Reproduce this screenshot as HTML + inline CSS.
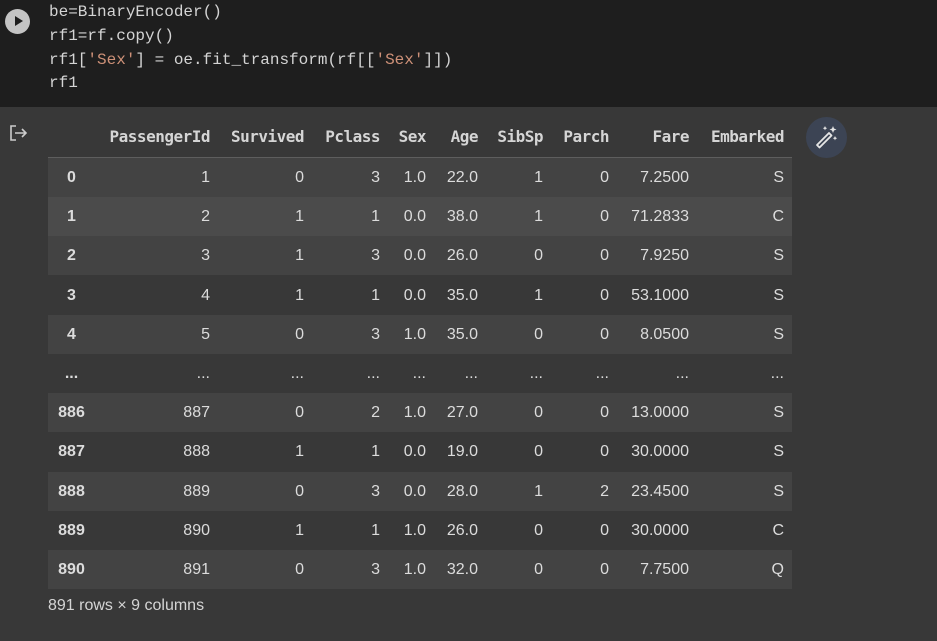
<!DOCTYPE html>
<html><head><style>
body{margin:0;width:937px;height:641px;background:#383838;overflow:hidden;position:relative;font-family:"Liberation Sans",sans-serif;}
.code{position:absolute;left:0;top:0;width:937px;height:107px;background:#1e1e1e;}
.cl{position:absolute;left:49px;font-family:"Liberation Mono","DejaVu Sans Mono",monospace;font-size:16px;color:#d4d4d4;white-space:pre;}
.s{color:#ce9178}
.run{position:absolute;left:5px;top:9px;width:25px;height:25px;border-radius:50%;background:#c4c4c4;}
.run:after{content:"";position:absolute;left:10px;top:7px;border-left:8px solid #1e1e1e;border-top:5.5px solid transparent;border-bottom:5.5px solid transparent;}
.row{position:absolute;left:48px;width:744px;height:39px;}
.c{position:absolute;font-size:16px;color:#dcdcdc;line-height:39px;text-align:right;}
.h{position:absolute;font-family:"DejaVu Sans Mono","Liberation Mono",monospace;font-weight:bold;font-size:16px;letter-spacing:-0.5px;color:#d5d5d5;top:127px;}
.i{font-weight:bold;text-align:center;}
</style></head><body>
<div class="code">
<div class="run"></div>
<div class="cl" style="top:3px">be=BinaryEncoder()</div>
<div class="cl" style="top:27px">rf1=rf.copy()</div>
<div class="cl" style="top:51px">rf1[<span class="s">'Sex'</span>] = oe.fit_transform(rf[[<span class="s">'Sex'</span>]])</div>
<div class="cl" style="top:74px">rf1</div>
</div>
<svg style="position:absolute;left:9px;top:124px" width="20" height="18" viewBox="0 0 20 18"><path d="M7 2H2v14h5" fill="none" stroke="#ccc" stroke-width="1.6"/><path d="M6 9h11M13 5l4 4-4 4" fill="none" stroke="#ccc" stroke-width="1.6"/></svg>
<div style="position:absolute;left:806px;top:117px;width:41px;height:41px;border-radius:50%;background:#3c4454"></div>
<svg style="position:absolute;left:813px;top:123px" width="28" height="28" viewBox="0 0 28 28"><path d="M4 22l12-12 2.5 2.5-12 12z" fill="none" stroke="#e6e6e6" stroke-width="1.8" stroke-linejoin="round"/><path d="M20 3l1 2.5 2.5 1-2.5 1-1 2.5-1-2.5-2.5-1 2.5-1zM12 3l.7 1.5 1.5.7-1.5.7-.7 1.5-.7-1.5-1.5-.7 1.5-.7zM22 13l.7 1.5 1.5.7-1.5.7-.7 1.5-.7-1.5-1.5-.7 1.5-.7z" fill="#e6e6e6"/></svg>
<div id="t"></div>
<div style="position:absolute;left:48px;top:157px;width:744px;height:1px;background:#5e5e5e"></div>
<div style="position:absolute;left:48px;top:597px;font-size:16px;color:#d5d5d5">891 rows × 9 columns</div>
<script>
var hdr=["PassengerId","Survived","Pclass","Sex","Age","SibSp","Parch","Fare","Embarked"];
var R=[210,304,380,426,478,543,609,689,784];
var rows=[["0",1,0,3,"1.0","22.0",1,0,"7.2500","S"],["1",2,1,1,"0.0","38.0",1,0,"71.2833","C"],["2",3,1,3,"0.0","26.0",0,0,"7.9250","S"],["3",4,1,1,"0.0","35.0",1,0,"53.1000","S"],["4",5,0,3,"1.0","35.0",0,0,"8.0500","S"],["...","...","...","...","...","...","...","...","...","..."],["886",887,0,2,"1.0","27.0",0,0,"13.0000","S"],["887",888,1,1,"0.0","19.0",0,0,"30.0000","S"],["888",889,0,3,"0.0","28.0",1,2,"23.4500","S"],["889",890,1,1,"1.0","26.0",0,0,"30.0000","C"],["890",891,0,3,"1.0","32.0",0,0,"7.7500","Q"]];
var h="";
hdr.forEach(function(t,k){h+='<div class="h" style="right:'+(937-R[k])+'px">'+t+'</div>';});
rows.forEach(function(r,i){
 var top=158+i*39.2;
 var bg=i%2==0?"#434343":"#383838"; if(i==1)bg="#4b4b4b";
 h+='<div class="row" style="top:'+top+'px;background:'+bg+'"></div>';
 h+='<div class="c i" style="top:'+top+'px;left:48px;width:47px">'+r[0]+'</div>';
 for(var k=1;k<10;k++) h+='<div class="c" style="top:'+top+'px;right:'+(937-R[k-1])+'px">'+r[k]+'</div>';
});
document.getElementById("t").innerHTML=h;
</script>
</body></html>
